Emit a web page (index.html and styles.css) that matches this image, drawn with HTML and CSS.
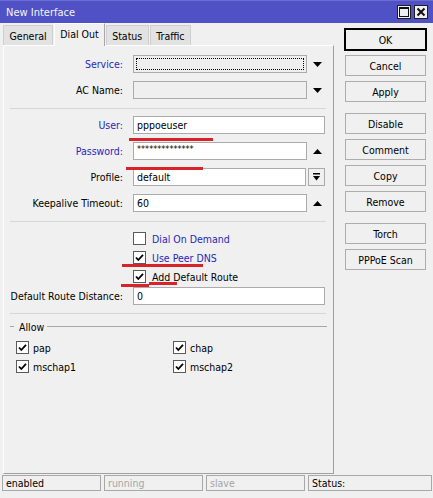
FILE: index.html
```html
<!DOCTYPE html>
<html>
<head>
<meta charset="utf-8">
<link rel="stylesheet" href="styles.css">
</head>
<body>
<div class="titlebar">
  <span class="title">New Interface</span>
  <div class="tb-btns">
    <span class="tb-btn"><svg width="10" height="10" viewBox="0 0 10 10"><rect x="0.5" y="0.5" width="9" height="9" fill="none" stroke="#111" stroke-width="1"/><rect x="0" y="0" width="10" height="2" fill="#111"/></svg></span>
    <span class="tb-btn"><svg width="10" height="10" viewBox="0 0 10 10"><path d="M1.5 1.5 L8.5 8.5 M8.5 1.5 L1.5 8.5" stroke="#111" stroke-width="2" fill="none"/></svg></span>
  </div>
</div>
<div class="main">
  <div class="left">
    <div class="tabs">
      <div class="tab">General</div>
      <div class="tab active">Dial Out</div>
      <div class="tab">Status</div>
      <div class="tab">Traffic</div>
    </div>
    <div class="panel">
      <div class="group g1">
        <div class="row">
          <span class="lbl blue">Service:</span>
          <div class="field empty focus"></div>
          <span class="side"><svg width="9" height="5" viewBox="0 0 9 5"><polygon points="0,0 9,0 4.5,5" fill="#000"/></svg></span>
        </div>
        <div class="row">
          <span class="lbl">AC Name:</span>
          <div class="field empty"></div>
          <span class="side"><svg width="9" height="5" viewBox="0 0 9 5"><polygon points="0,0 9,0 4.5,5" fill="#000"/></svg></span>
        </div>
      </div>
      <div class="sep"></div>
      <div class="group">
        <div class="row">
          <span class="lbl blue">User:</span>
          <div class="field full">pppoeuser</div>
        </div>
        <div class="row">
          <span class="lbl blue">Password:</span>
          <div class="field pw">**************</div>
          <span class="side"><svg width="9" height="5" viewBox="0 0 9 5"><polygon points="0,5 9,5 4.5,0" fill="#000"/></svg></span>
        </div>
        <div class="row">
          <span class="lbl">Profile:</span>
          <div class="field short">default</div>
          <span class="dd-btn"><svg width="7" height="8" viewBox="0 0 7 8"><rect x="0" y="0" width="7" height="1.5" fill="#000"/><polygon points="0,3 7,3 3.5,7.5" fill="#000"/></svg></span>
        </div>
        <div class="row">
          <span class="lbl">Keepalive Timeout:</span>
          <div class="field">60</div>
          <span class="side"><svg width="9" height="5" viewBox="0 0 9 5"><polygon points="0,5 9,5 4.5,0" fill="#000"/></svg></span>
        </div>
      </div>
      <div class="sep"></div>
      <div class="checks">
        <div class="chk"><span class="cb"></span><span class="blue">Dial On Demand</span></div>
        <div class="chk"><span class="cb on"><svg width="11" height="11" viewBox="0 0 11 11"><path d="M2 5.5 L4.3 8 L9 2.8" stroke="#000" stroke-width="1.8" fill="none"/></svg></span><span class="blue">Use Peer DNS</span></div>
        <div class="chk"><span class="cb on"><svg width="11" height="11" viewBox="0 0 11 11"><path d="M2 5.5 L4.3 8 L9 2.8" stroke="#000" stroke-width="1.8" fill="none"/></svg></span><span>Add Default Route</span></div>
      </div>
      <div class="row drd">
        <span class="lbl">Default Route Distance:</span>
        <div class="field full">0</div>
      </div>
      <div class="sep sep3"></div>
      <div class="allow-hd"><span class="dash"></span><span class="allow-t">Allow</span><span class="line"></span></div>
      <div class="allow">
        <div class="chk a"><span class="cb on"><svg width="11" height="11" viewBox="0 0 11 11"><path d="M2 5.5 L4.3 8 L9 2.8" stroke="#000" stroke-width="1.8" fill="none"/></svg></span><span>pap</span></div>
        <div class="chk a"><span class="cb on"><svg width="11" height="11" viewBox="0 0 11 11"><path d="M2 5.5 L4.3 8 L9 2.8" stroke="#000" stroke-width="1.8" fill="none"/></svg></span><span>chap</span></div>
        <div class="chk a"><span class="cb on"><svg width="11" height="11" viewBox="0 0 11 11"><path d="M2 5.5 L4.3 8 L9 2.8" stroke="#000" stroke-width="1.8" fill="none"/></svg></span><span>mschap1</span></div>
        <div class="chk a"><span class="cb on"><svg width="11" height="11" viewBox="0 0 11 11"><path d="M2 5.5 L4.3 8 L9 2.8" stroke="#000" stroke-width="1.8" fill="none"/></svg></span><span>mschap2</span></div>
      </div>
    </div>
  </div>
  <div class="actions">
    <div class="btn ok">OK</div>
    <div class="btn">Cancel</div>
    <div class="btn">Apply</div>
    <div class="btn grp">Disable</div>
    <div class="btn">Comment</div>
    <div class="btn">Copy</div>
    <div class="btn">Remove</div>
    <div class="btn grp">Torch</div>
    <div class="btn">PPPoE Scan</div>
  </div>
</div>
<div class="statusbar">
  <div class="cell">enabled</div>
  <div class="cell dim">running</div>
  <div class="cell dim">slave</div>
  <div class="cell last">Status:</div>
</div>
<div class="mark m-user"></div>
<div class="mark m-pass"></div>
<div class="mark m-dns"></div>
<div class="mark m-route1"></div>
<div class="mark m-route2"></div>
</body>
</html>
```
FILE: styles.css
```css
* { box-sizing: border-box; }
html, body { margin: 0; padding: 0; }
body {
  position: relative;
  width: 433px;
  height: 498px;
  overflow: hidden;
  background: #f0f0f0;
  font-family: "DejaVu Sans Condensed", "Liberation Sans", Arial, sans-serif;
  font-size: 10.5px;
  color: #000;
}
.blue { color: #2828b8; }

.titlebar {
  height: 23px;
  background: #5151c6;
  border-top: 1px solid #6b6bd3;
  display: flex;
  align-items: center;
  padding: 0 5px 0 6px;
  color: #f4f4fa;
  font-size: 11px;
}
.title { flex: 1; }
.tb-btns { display: flex; gap: 3px; }
.tb-btn {
  width: 14px;
  height: 14px;
  background: #f0f0f0;
  border: 1px solid #1e1e1e;
  display: flex;
  align-items: center;
  justify-content: center;
}

.main { display: flex; height: 452px; }
.left { margin-left: 3px; width: 331px; display: flex; flex-direction: column; }

.tabs { display: flex; height: 22px; align-items: flex-end; position: relative; z-index: 1; }
.tab {
  height: 20px;
  padding: 0 5.5px;
  display: flex;
  align-items: center;
  background: #e2e2e2;
  border: 1px solid #cfcfcf;
  border-bottom: none;
  margin-right: 1px;
}
.tab.active {
  height: 23px;
  margin-bottom: -1px;
  background: #f0f0f0;
  border-color: #fdfdfd #a8a8a8 #f0f0f0 #fdfdfd;
  padding: 0 5px 2px;
}

.panel {
  height: 429px;
  border: 1px solid;
  border-color: #fdfdfd #a0a0a0 #a0a0a0 #fdfdfd;
}

.group { display: flex; flex-direction: column; gap: 8px; }
.g1 { margin-top: 9px; }
.row { display: flex; align-items: center; height: 18px; }
.lbl { width: 119px; margin-right: 10px; text-align: right; white-space: nowrap; }
.field {
  position: relative;
  width: 174px;
  height: 18px;
  background: #fff;
  border: 1px solid #ababab;
  padding-left: 3px;
  line-height: 16px;
  white-space: nowrap;
}
.field.empty { background: #efefef; }
.field.focus::after {
  content: "";
  position: absolute;
  left: 2px; top: 2px; right: 2px; bottom: 2px;
  border: 1px dotted #000;
}
.field.full { width: 192px; }
.field.short { width: 173px; margin-right: 2px; }
.field.pw { font-size: 9px; line-height: 13px; }
.side { width: 18px; display: flex; justify-content: flex-end; padding-right: 3px; }
.dd-btn {
  width: 17px;
  height: 18px;
  border: 1px solid #ababab;
  display: flex;
  align-items: center;
  justify-content: center;
}

.sep { border-top: 1px solid #d6d6d6; margin: 9px 7px 7px 6px; }
.sep3 { margin: 8px 7px 0 6px; }

.checks { padding-left: 129px; }
.chk { display: flex; align-items: center; height: 19px; white-space: nowrap; }
.cb {
  width: 13px;
  height: 13px;
  background: #fff;
  border: 1px solid #5a5a5a;
  margin-right: 6px;
  display: flex;
  align-items: center;
  justify-content: center;
}
.drd { margin-top: 1px; }

.allow-hd { display: flex; align-items: center; height: 13px; margin: 6px 6px 0 6px; }
.dash { width: 4px; border-top: 1px solid #a8a8a8; }
.allow-t { padding: 0 3px 0 5px; }
.line { flex: 1; border-top: 1px solid #a8a8a8; }
.allow { display: grid; grid-template-columns: 157px 1fr; margin: 5px 0 0 12px; }
.chk.a .cb { margin-right: 4px; }

.actions { margin-left: 11px; width: 81px; padding-top: 6px; display: flex; flex-direction: column; gap: 5px; }
.btn {
  height: 21px;
  background: #f0f0f0;
  border: 1px solid #adadad;
  display: flex;
  align-items: center;
  justify-content: center;
  white-space: nowrap;
}
.btn.ok { border-color: #000; box-shadow: 0 0 0 1px #000; }
.btn.grp { margin-top: 6px; }

.statusbar { display: flex; gap: 3px; height: 23px; padding: 0 1px 0 2px; }
.cell {
  width: 99px;
  height: 16px;
  border: 1px solid #a8a8a8;
  padding-left: 3px;
  line-height: 14px;
  white-space: nowrap;
}
.cell.dim { color: #a5a5a5; }
.cell.last { flex: 1; }

.mark { position: absolute; height: 3px; background: #d8232a; }
.m-user { left: 129px; top: 138px; width: 84px; }
.m-pass { left: 126px; top: 167px; width: 77px; }
.m-dns { left: 122px; top: 264px; width: 81px; }
.m-route1 { left: 121px; top: 284px; width: 28px; }
.m-route2 { left: 149px; top: 282px; width: 28px; }
```
